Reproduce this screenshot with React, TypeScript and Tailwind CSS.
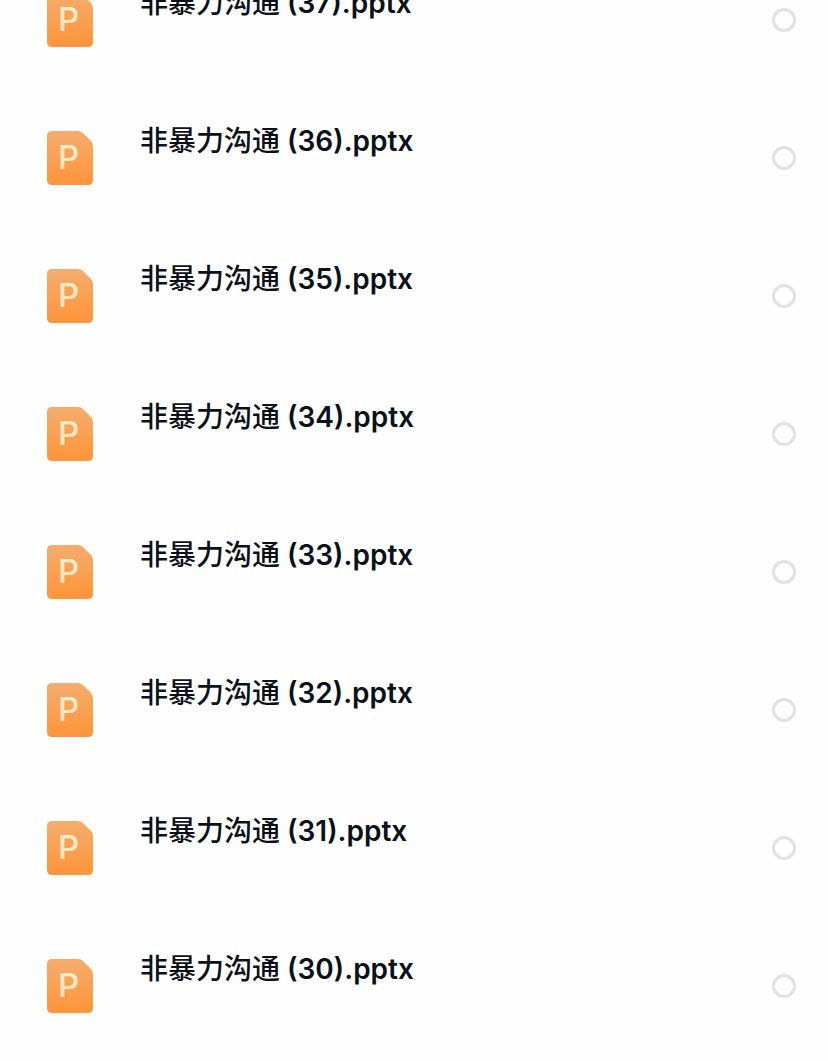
import { useState } from "react";

type PptFile = {
  id: number;
  title: string;
};

type FileRowProps = {
  file: PptFile;
  checked: boolean;
  onToggle: (id: number) => void;
};

const files: PptFile[] = [37, 36, 35, 34, 33, 32, 31, 30].map((id) => ({
  id,
  title: "非暴力沟通",
}));

const PptIcon = () => (
  <svg
    width="46"
    height="54"
    viewBox="0 0 46 54"
    className="shrink-0"
    aria-hidden="true"
  >
    <defs>
      <linearGradient id="ppt-bg" x1="0" y1="0" x2="0" y2="1">
        <stop offset="0" stopColor="#f4ad6e" />
        <stop offset="1" stopColor="#ff9439" />
      </linearGradient>
      <linearGradient id="ppt-letter" x1="0" y1="0" x2="0" y2="1">
        <stop offset="0" stopColor="#fff0cf" />
        <stop offset="1" stopColor="#ffe2b8" />
      </linearGradient>
    </defs>
    <path
      d="M5 0H31Q34 0 36 2L44 10Q46 12 46 15V49Q46 54 41 54H5Q0 54 0 49V5Q0 0 5 0Z"
      fill="url(#ppt-bg)"
    />
    <text
      x="11"
      y="38"
      fill="url(#ppt-letter)"
      className="font-['Inter',sans-serif] text-[33px] font-medium"
    >
      P
    </text>
  </svg>
);

const FileRow = ({ file, checked, onToggle }: FileRowProps) => {
  const inputId = `file-${file.id}`;

  return (
    <li className="flex h-[138px] items-center pr-8 pl-[47px]">
      <PptIcon />
      {/* File name sits above the middle of the row */}
      <label
        htmlFor={inputId}
        className="ml-[47px] flex flex-1 gap-[7px] pb-[34px] text-[28px] leading-8 whitespace-nowrap text-[#0b1118]"
      >
        <span className="font-medium">{file.title}</span>
        <span className="font-semibold">({file.id}).pptx</span>
      </label>
      <input
        id={inputId}
        type="checkbox"
        checked={checked}
        onChange={() => onToggle(file.id)}
        className="size-6 shrink-0 appearance-none rounded-full border-3 border-[#e2e2e2] checked:bg-[#ff9235]"
      />
    </li>
  );
};

export default function App() {
  const [selected, setSelected] = useState<number[]>([]);

  const toggleFile = (id: number) => {
    setSelected((value) =>
      value.includes(id) ? value.filter((item) => item !== id) : [...value, id]
    );
  };

  return (
    <main className="h-screen overflow-hidden bg-[#fefefe] font-['Inter','Noto_Sans_CJK_SC',sans-serif]">
      {/* The list is scrolled a little past its first row */}
      <ul className="-mt-[49px]">
        {files.map((file) => (
          <FileRow
            key={file.id}
            file={file}
            checked={selected.includes(file.id)}
            onToggle={toggleFile}
          />
        ))}
      </ul>
    </main>
  );
}
